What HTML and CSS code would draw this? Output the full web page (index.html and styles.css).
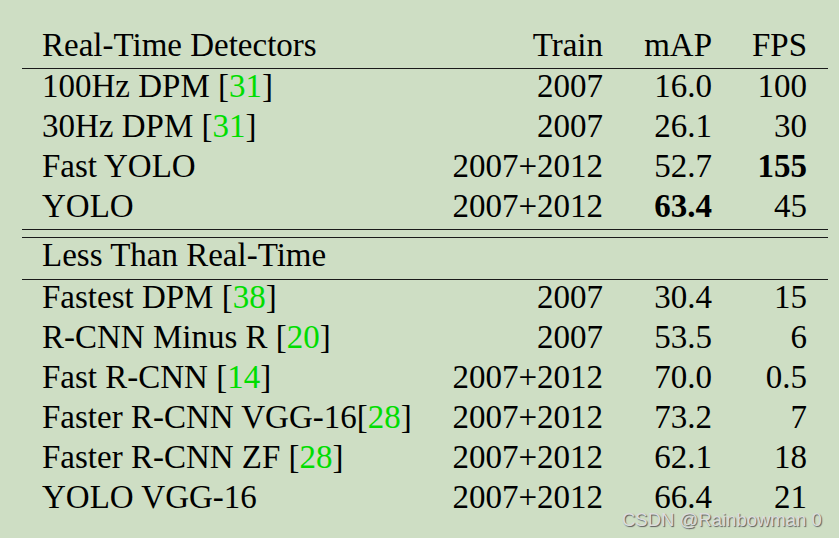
FILE: index.html
```
<!DOCTYPE html>
<html lang="en">
	<head>
		<meta charset="utf-8" />
		<title>Real-Time Systems on PASCAL VOC 2007</title>

		<meta name="viewport" content="width=device-width, initial-scale=1" />

		<link rel="stylesheet" href="styles.css">
	</head>
	<body>
		<table id="results">
			<colgroup>
				<col class="col-name">
				<col class="col-train">
				<col class="col-map">
				<col class="col-fps">
			</colgroup>
			<thead>
				<tr>
					<th>Real-Time Detectors</th>
					<th>Train</th>
					<th>mAP</th>
					<th>FPS</th>
				</tr>
			</thead>
			<tbody class="group-end">
				<tr>
					<td>100Hz DPM [<span class="cite">31</span>]</td>
					<td>2007</td>
					<td>16.0</td>
					<td>100</td>
				</tr>
				<tr>
					<td>30Hz DPM [<span class="cite">31</span>]</td>
					<td>2007</td>
					<td>26.1</td>
					<td>30</td>
				</tr>
				<tr>
					<td>Fast YOLO</td>
					<td>2007+2012</td>
					<td>52.7</td>
					<td><b>155</b></td>
				</tr>
				<tr>
					<td>YOLO</td>
					<td>2007+2012</td>
					<td><b>63.4</b></td>
					<td>45</td>
				</tr>
			</tbody>
			<tbody class="section">
				<tr>
					<td colspan="4">Less Than Real-Time</td>
				</tr>
			</tbody>
			<tbody>
				<tr>
					<td>Fastest DPM [<span class="cite">38</span>]</td>
					<td>2007</td>
					<td>30.4</td>
					<td>15</td>
				</tr>
				<tr>
					<td>R-CNN Minus R [<span class="cite">20</span>]</td>
					<td>2007</td>
					<td>53.5</td>
					<td>6</td>
				</tr>
				<tr>
					<td>Fast R-CNN [<span class="cite">14</span>]</td>
					<td>2007+2012</td>
					<td>70.0</td>
					<td>0.5</td>
				</tr>
				<tr>
					<td>Faster R-CNN VGG-16[<span class="cite">28</span>]</td>
					<td>2007+2012</td>
					<td>73.2</td>
					<td>7</td>
				</tr>
				<tr>
					<td>Faster R-CNN ZF [<span class="cite">28</span>]</td>
					<td>2007+2012</td>
					<td>62.1</td>
					<td>18</td>
				</tr>
				<tr>
					<td>YOLO VGG-16</td>
					<td>2007+2012</td>
					<td>66.4</td>
					<td>21</td>
				</tr>
			</tbody>
		</table>

		<div class="watermark">CSDN @Rainbowman 0</div>
	</body>
</html>
```

FILE: styles.css
```
* { box-sizing: border-box; }

html,
body {
	margin: 0;
	width: 100%;
	height: 100%;
	overflow: hidden;
	background: #cedec4;
}

body {
	position: relative;
	font: 33px/34px "Liberation Serif", "Times New Roman", serif;
	color: #000;
}

#results {
	table-layout: fixed;
	border-collapse: collapse;
	width: 806px;
	margin: 28px 0 0 22px;
}

.col-name { width: 398px; }
.col-train { width: 183px; }
.col-map { width: 109px; }
.col-fps { width: 116px; }

#results th,
#results td {
	padding: 0 0 6px 0;
	height: 40px;
	font-weight: normal;
	text-align: right;
	white-space: nowrap;
}

#results th:first-child,
#results td:first-child {
	text-align: left;
	padding-left: 20px;
}

#results th:last-child,
#results td:last-child {
	padding-right: 21px;
}

#results thead tr,
#results .group-end tr:last-child,
#results .section tr {
	border-bottom: 1px solid #1a1a1a;
}

/* second line of the double rule, 7px under the first */
#results .section td {
	height: 50px;
	padding-top: 8px;
	vertical-align: top;
	background: linear-gradient(#1a1a1a, #1a1a1a) 0 7px / 100% 1px no-repeat;
}

#results b {
	font-weight: bold;
}

.cite {
	color: #00dd00;
}

.watermark {
	position: absolute;
	left: 622px;
	top: 510px;
	font: 18.5px/20px "Liberation Sans", Arial, sans-serif;
	color: #dcdcdc;
	text-shadow: 1px 1px 1px #5a5a5a;
}
```
